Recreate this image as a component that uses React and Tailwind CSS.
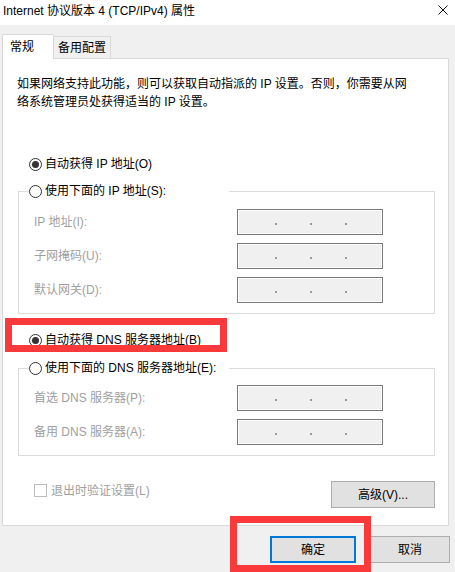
import React from "react";

const font = "font-['Liberation_Sans','Noto_Sans_CJK_SC',sans-serif]";

function Radio({ checked, label }) {
  return (
    <div className="flex items-center h-[18px]">
      <span className="w-[13px] h-[13px] rounded-full border border-[#333333] bg-white flex items-center justify-center">
        {checked && <span className="w-[7px] h-[7px] rounded-full bg-[#333333]" />}
      </span>
      <span className="ml-[3px] text-black">{label}</span>
    </div>
  );
}

function IpField() {
  return (
    <div className="w-[146px] h-[26px] border border-[#7a7a7a] bg-[#f0f0f0] shadow-[inset_0_0_0_1px_#ffffff] flex items-start pt-[13px] pl-[20px]">
      {[0, 1, 2].map((i) => (
        <span key={i} className="w-[35px] flex justify-center">
          <span className="w-[2px] h-[2px] bg-[#9a9a9a]" />
        </span>
      ))}
    </div>
  );
}

function GroupBox({ label, height, firstGap, rows }) {
  return (
    <div className={`ml-[15px] w-[417px] border border-[#dcdcdc] ${height}`}>
      <div className="-mt-[10px] ml-[10px] w-[200px] bg-white">
        <Radio label={label} />
      </div>
      <div className={`flex flex-col gap-[8px] ${firstGap}`}>
        {rows.map((r) => (
          <div key={r} className="flex items-center pl-[15px]">
            <span className="w-[203px] text-[#a0a0a0]">{r}</span>
            <IpField />
          </div>
        ))}
      </div>
    </div>
  );
}

export default function App() {
  return (
    <div className={`relative w-[455px] h-[572px] overflow-hidden bg-[#f0f0f0] text-[12px] leading-[18px] text-black ${font}`}>
      {/* title bar */}
      <div className="h-[25px] bg-white flex items-start justify-between">
        <div className="h-[21px] flex items-center pl-[3px]">Internet 协议版本 4 (TCP/IPv4) 属性</div>
        <svg className="mt-[5px] mr-[7px]" width="10" height="10" viewBox="0 0 10 10">
          <path d="M0.5 0.5 L9.5 9.5 M9.5 0.5 L0.5 9.5" stroke="#111" strokeWidth="1" fill="none" />
        </svg>
      </div>

      {/* tabs */}
      <div className="mt-[9px] ml-[2px] h-[24px] flex items-end">
        <div className="relative z-10 -mb-px h-[25px] w-[52px] bg-white border border-b-0 border-[#d9d9d9] flex items-center pl-[7px] pb-[1px]">
          常规
        </div>
        <div className="h-[22px] w-[57px] bg-[#f0f0f0] border border-l-0 border-b-0 border-[#d9d9d9] flex items-center pl-[4px]">
          备用配置
        </div>
      </div>

      {/* panel */}
      <div className="ml-[2px] w-[447px] h-[468px] bg-white border border-[#d9d9d9]">
        <p className="mt-[16px] pl-[14px]">
          如果网络支持此功能，则可以获取自动指派的 IP 设置。否则，你需要从网
          <br />
          络系统管理员处获得适当的 IP 设置。
        </p>

        <div className="mt-[44px] pl-[26px]">
          <Radio checked label="自动获得 IP 地址(O)" />
        </div>

        <div className="mt-[18px]">
          <GroupBox
            label="使用下面的 IP 地址(S):"
            height="h-[123px]"
            firstGap="mt-[9px]"
            rows={["IP 地址(I):", "子网掩码(U):", "默认网关(D):"]}
          />
        </div>

        <div className="mt-[17px] pl-[26px]">
          <Radio checked label="自动获得 DNS 服务器地址(B)" />
        </div>

        <div className="mt-[19px]">
          <GroupBox
            label="使用下面的 DNS 服务器地址(E):"
            height="h-[88px]"
            firstGap="mt-[8px]"
            rows={["首选 DNS 服务器(P):", "备用 DNS 服务器(A):"]}
          />
        </div>

        <div className="mt-[25px] pl-[31px] pr-[13px] flex justify-between items-start">
          <div className="flex items-center h-[17px] mt-[1px] text-[#a0a0a0]">
            <span className="w-[13px] h-[13px] border border-[#bcbcbc] bg-white" />
            <span className="ml-[4px]">退出时验证设置(L)</span>
          </div>
          <button className="w-[104px] h-[27px] bg-[#e1e1e1] border border-[#adadad] flex items-center justify-center">
            高级(V)...
          </button>
        </div>
      </div>

      {/* dialog buttons */}
      <div className="mt-[10px] pr-[5px] flex justify-end gap-[14px]">
        <button className="w-[86px] h-[27px] bg-[#e1e1e1] border-2 border-[#0078d7] flex items-center justify-center">
          确定
        </button>
        <button className="w-[80px] h-[27px] bg-[#e1e1e1] border border-[#adadad] flex items-center justify-center">
          取消
        </button>
      </div>

      {/* red annotation boxes */}
      <div className="absolute left-[5px] top-[318px] w-[222px] h-[34px] border-[7px] border-[#fa3a3a]" />
      <div className="absolute left-[230px] top-[516px] w-[141px] h-[56px] border-[7px] border-[#fa3a3a]" />
    </div>
  );
}
